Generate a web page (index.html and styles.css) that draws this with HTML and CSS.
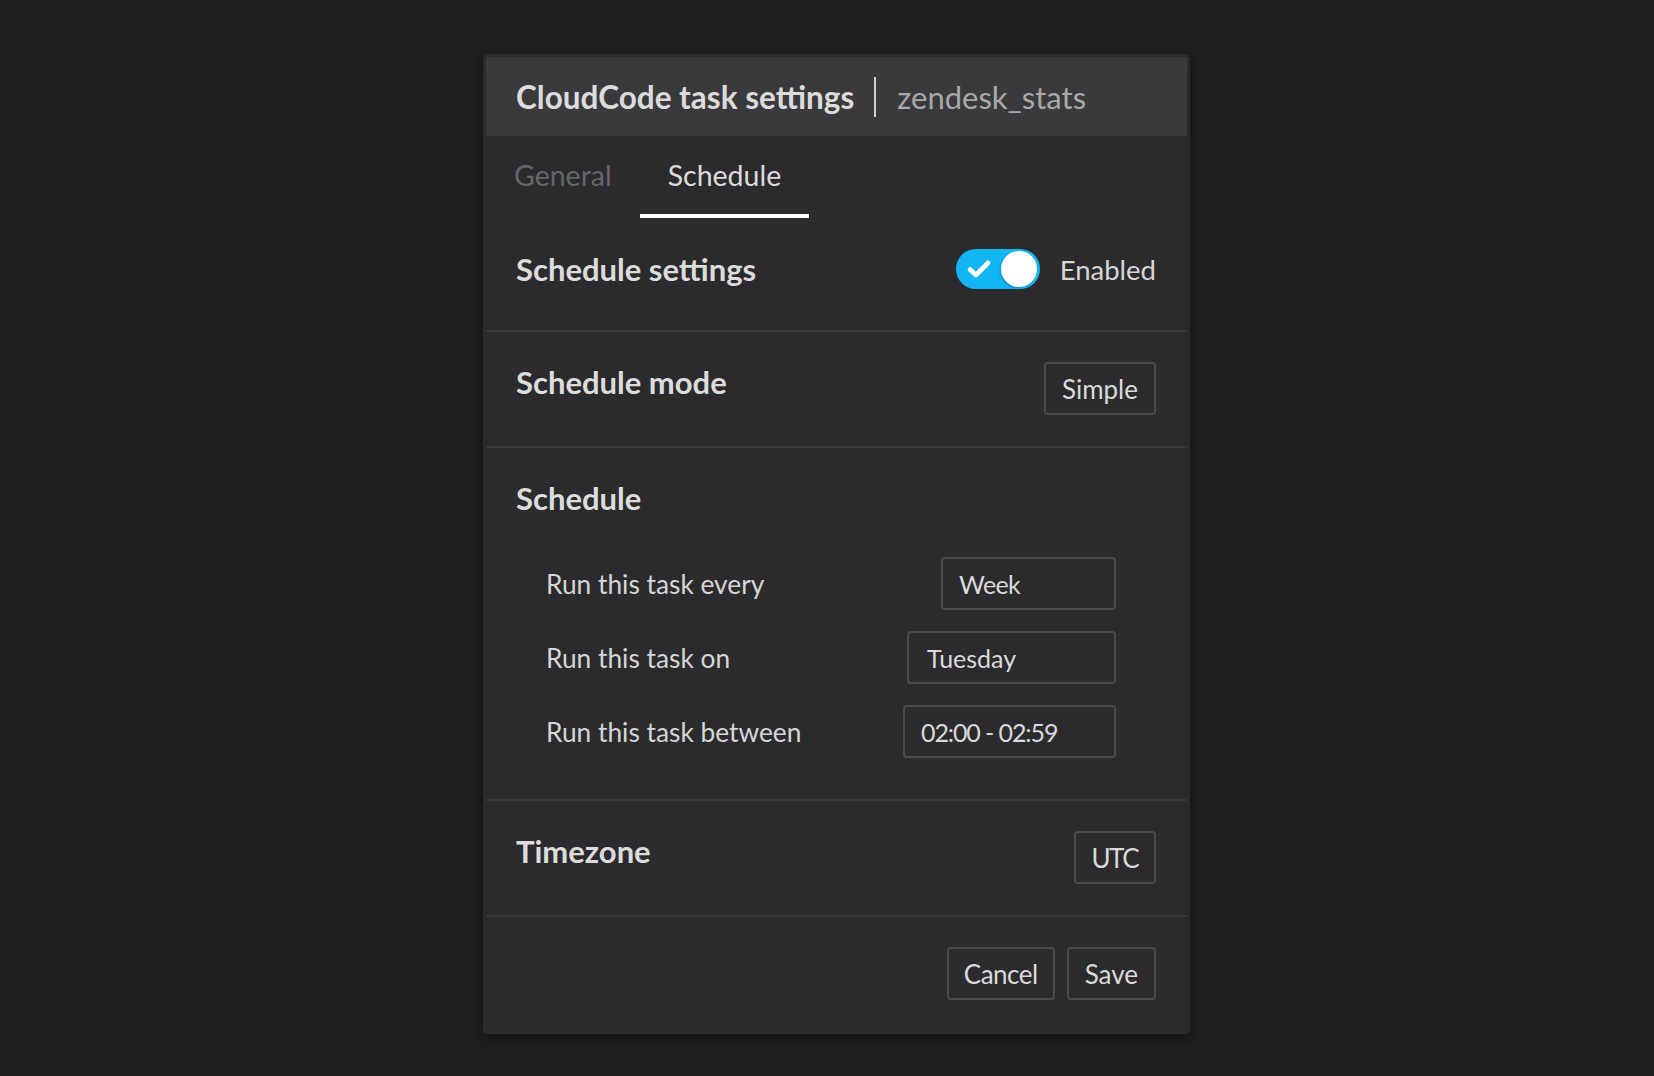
FILE: index.html
```html
<!DOCTYPE html>
<html>
<head>
<meta charset="utf-8">
<link rel="stylesheet" href="styles.css">
</head>
<body>
<div class="dialog">
  <div class="header">
    <span class="title">CloudCode task settings</span>
    <span class="vsep"></span>
    <span class="subtitle">zendesk_stats</span>
  </div>
  <div class="tabs">
    <div class="tab">General</div>
    <div class="tab active">Schedule</div>
  </div>
  <div class="row row-first">
    <div class="label">Schedule settings</div>
    <div class="toggle-wrap">
      <div class="toggle">
        <svg class="check" width="26" height="20" viewBox="0 0 26 20"><path d="M4 10.5 L10 16 L22 4" fill="none" stroke="#fff" stroke-width="4.6" stroke-linecap="round" stroke-linejoin="round"/></svg>
        <span class="knob"></span>
      </div>
      <span class="toggle-text">Enabled</span>
    </div>
  </div>
  <div class="row">
    <div class="label">Schedule mode</div>
    <div class="btn">Simple</div>
  </div>
  <div class="row row-schedule">
    <div class="label">Schedule</div>
    <div class="sublist">
      <div class="subrow">
        <span class="sublabel">Run this task every</span>
        <span class="input w-week">Week</span>
      </div>
      <div class="subrow">
        <span class="sublabel">Run this task on</span>
        <span class="input w-day">Tuesday</span>
      </div>
      <div class="subrow">
        <span class="sublabel">Run this task between</span>
        <span class="input w-time">02:00 - 02:59</span>
      </div>
    </div>
  </div>
  <div class="row">
    <div class="label">Timezone</div>
    <div class="btn btn-utc">UTC</div>
  </div>
  <div class="footer">
    <div class="btn btn-cancel">Cancel</div>
    <div class="btn">Save</div>
  </div>
</div>
</body>
</html>
```
FILE: styles.css
```css
* { box-sizing: border-box; }
html, body { margin: 0; padding: 0; }
body {
  background: #1f1f20;
  font-family: Lato, "Noto Sans", sans-serif;
  color: #d9d9d9;
  width: 1654px;
  height: 1076px;
  overflow: hidden;
}
.dialog {
  margin: 54px 0 0 483px;
  width: 707px;
  padding: 3px;
  background: #2b2b2d;
  border-radius: 5px;
  box-shadow: 0 4px 16px rgba(0,0,0,0.45);
}
.header {
  height: 79px;
  background: #3a3a3c;
  display: flex;
  align-items: center;
  padding-left: 30px;
}
.title {
  font-weight: 700;
  font-size: 31.5px;
  color: #dcdcdc;
}
.vsep {
  width: 2px;
  height: 40px;
  background: #cfcfcf;
  margin: 0 21px 0 20px;
}
.subtitle {
  font-size: 31px;
  color: #a9a9a9;
}
.tabs {
  display: flex;
  height: 82px;
}
.tab {
  padding: 0 28px;
  font-size: 28.5px;
  color: #666668;
  display: flex;
  align-items: center;
  border-bottom: 4px solid transparent;
}
.tab.active {
  color: #dcdcdc;
  border-bottom-color: #ffffff;
}
.row {
  display: flex;
  justify-content: space-between;
  align-items: flex-start;
  padding: 30px 31px 31px 30px;
  border-bottom: 2px solid #39393b;
}
.row-first {
  align-items: center;
  padding-top: 31px;
  padding-bottom: 41px;
}
.label {
  font-weight: 700;
  font-size: 31px;
  line-height: 40px;
  color: #dcdcdc;
}
.toggle-wrap {
  display: flex;
  align-items: center;
}
.toggle {
  width: 84px;
  height: 40px;
  border-radius: 20px;
  background: #12b6f4;
  display: flex;
  align-items: center;
  justify-content: space-between;
  padding: 0 3px 0 10px;
}
.knob {
  width: 36px;
  height: 36px;
  border-radius: 50%;
  background: #ffffff;
  box-shadow: -1px 1px 2px rgba(0,60,100,0.35);
}
.toggle-text {
  font-size: 27.5px;
  margin-left: 20px;
  color: #d6d6d6;
}
.btn {
  height: 53px;
  padding: 0 16px;
  border: 2px solid #4a4a4c;
  border-radius: 4px;
  font-size: 26px;
  display: flex;
  align-items: center;
  color: #dadada;
}
.btn-utc {
  letter-spacing: -1.5px;
  padding: 0 16px 0 15px;
}
.btn-cancel {
  letter-spacing: -0.5px;
  padding: 0 15px;
}
.row-schedule {
  flex-direction: column;
  align-items: stretch;
  padding-bottom: 41px;
}
.sublist {
  margin-top: 39px;
  padding-left: 30px;
  padding-right: 40px;
  display: flex;
  flex-direction: column;
  gap: 21px;
}
.subrow {
  display: flex;
  justify-content: space-between;
  align-items: center;
}
.sublabel {
  font-size: 26.3px;
  color: #d6d6d6;
}
.input {
  height: 53px;
  border: 2px solid #4a4a4c;
  border-radius: 4px;
  font-size: 25px;
  display: flex;
  align-items: center;
  padding-left: 16px;
  color: #dadada;
}
.w-week { width: 175px; letter-spacing: -0.6px; }
.w-day { width: 209px; padding-left: 18px; }
.w-time { width: 213px; letter-spacing: -1.1px; }
.footer {
  display: flex;
  justify-content: flex-end;
  gap: 12px;
  padding: 30px 31px 31px 30px;
}
```
